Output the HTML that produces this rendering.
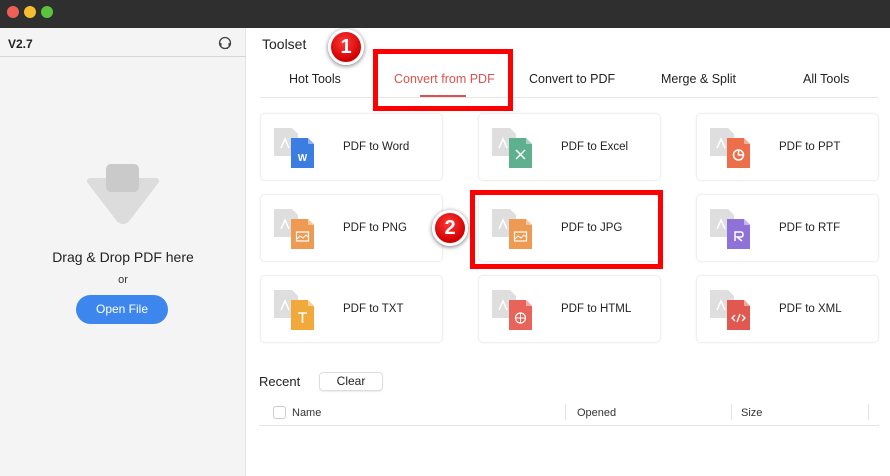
<!DOCTYPE html>
<html><head><meta charset="utf-8"><style>
*{margin:0;padding:0;box-sizing:border-box}
body{width:890px;height:476px;overflow:hidden;background:#fff;font-family:"Liberation Sans",Arial,sans-serif;position:relative;color:#222}
.a{position:absolute}
.card{position:absolute;width:183px;height:68px;border:1px solid #f0f0f0;border-radius:5px;background:#fff;box-shadow:0 0 2px rgba(0,0,0,0.05)}
.card svg{position:absolute;left:12px;top:12px}
.card span{position:absolute;left:82px;top:27px;font-size:11.5px;color:#222}
.tab{position:absolute;top:72px;font-size:12.5px;color:#222}
.badge{position:absolute;width:36px;height:36px;border-radius:50%;background:radial-gradient(circle at 45% 35%,#ff3a3a,#d00000 70%);border:3px solid #fff;box-shadow:0 1px 5px rgba(0,0,0,0.55);color:#fff;font-weight:bold;font-size:20px;text-align:center;line-height:30px}
.rbox{position:absolute;border:5px solid #f00}
</style></head><body>
<div class="a" style="left:0;top:0;width:890px;height:28px;background:#2f2f2f"></div>
<div class="a" style="left:7px;top:6px;width:12px;height:12px;border-radius:50%;background:#ee5f57"></div>
<div class="a" style="left:24px;top:6px;width:12px;height:12px;border-radius:50%;background:#f5bd2f"></div>
<div class="a" style="left:41px;top:6px;width:12px;height:12px;border-radius:50%;background:#5ac43f"></div>

<div class="a" style="left:0;top:28px;width:246px;height:448px;background:#f4f4f4;border-right:1px solid #e4e4e4"></div>
<div class="a" style="left:0;top:56px;width:246px;height:1px;background:#d6d6d6"></div>
<div class="a" style="left:8px;top:37px;font-size:12px;font-weight:bold;color:#222">V2.7</div>
<svg class="a" style="left:217px;top:35px" width="16" height="16" viewBox="0 0 16 16"><circle cx="8" cy="8" r="5.5" fill="none" stroke="#444" stroke-width="1.3"/><path d="M2.5 8h2v3h-2zM11.5 8h2v3h-2z" fill="#444"/><path d="M8 13.5h3" stroke="#444"/></svg>

<svg class="a" style="left:84px;top:163px" width="78" height="62" viewBox="0 0 78 62"><path d="M6 18h66l-29 38q-4 4-8 0z" fill="#dcdcdc" stroke="#dcdcdc" stroke-width="6" stroke-linejoin="round"/><rect x="22" y="1" width="33" height="28" rx="5" fill="#cacaca"/></svg>
<div class="a" style="left:0;width:246px;top:249px;text-align:center;font-size:14px;color:#222">Drag &amp; Drop PDF here</div>
<div class="a" style="left:0;width:246px;top:274px;text-align:center;font-size:11px;color:#333">or</div>
<div class="a" style="left:76px;top:295px;width:92px;height:29px;border-radius:15px;background:#3d86ee;color:#fff;font-size:12px;text-align:center;line-height:29px">Open File</div>

<div class="a" style="left:262px;top:36px;font-size:14px;color:#222">Toolset</div>
<div class="tab" style="left:289px">Hot Tools</div>
<div class="tab" style="left:394px;color:#d9534f">Convert from PDF</div>
<div class="tab" style="left:529px">Convert to PDF</div>
<div class="tab" style="left:661px">Merge &amp; Split</div>
<div class="tab" style="left:803px">All Tools</div>
<div class="a" style="left:260px;top:97px;width:618px;height:1px;background:#e6e6e6"></div>
<div class="a" style="left:420px;top:95px;width:46px;height:2px;background:#d9534f"></div>

<div class="card" style="left:260px;top:113px"><svg width="45" height="45"><path d="M1 2h18l6 6v22h-24z" fill="#dedede"/><path d="M8 22l4-9 4 9" stroke="#fff" stroke-width="1.5" fill="none"/><path d="M18 12h17l6 6v24h-23z" fill="#3b7de0"/><path d="M35 12v6h6z" fill="#8fb6f0"/><text x="29.5" y="35" font-size="10" font-weight="bold" fill="#fff" text-anchor="middle" font-family="Liberation Sans">W</text></svg><span>PDF to Word</span></div>
<div class="card" style="left:478px;top:113px"><svg width="45" height="45"><path d="M1 2h18l6 6v22h-24z" fill="#dedede"/><path d="M8 22l4-9 4 9" stroke="#fff" stroke-width="1.5" fill="none"/><path d="M18 12h17l6 6v24h-23z" fill="#5fb08f"/><path d="M35 12v6h6z" fill="#a6d4c1"/><path d="M25 24l9 9M34 24l-9 9" stroke="#fff" stroke-width="1.5"/></svg><span>PDF to Excel</span></div>
<div class="card" style="left:696px;top:113px"><svg width="45" height="45"><path d="M1 2h18l6 6v22h-24z" fill="#dedede"/><path d="M8 22l4-9 4 9" stroke="#fff" stroke-width="1.5" fill="none"/><path d="M18 12h17l6 6v24h-23z" fill="#ec6e4a"/><path d="M35 12v6h6z" fill="#f5b09c"/><circle cx="29.5" cy="29" r="5" fill="none" stroke="#fff" stroke-width="1.5"/><path d="M29.5 24v5h5" stroke="#fff" stroke-width="1.5" fill="none"/></svg><span>PDF to PPT</span></div>

<div class="card" style="left:260px;top:194px"><svg width="45" height="45"><path d="M1 2h18l6 6v22h-24z" fill="#dedede"/><path d="M8 22l4-9 4 9" stroke="#fff" stroke-width="1.5" fill="none"/><path d="M18 12h17l6 6v24h-23z" fill="#ef9a52"/><path d="M35 12v6h6z" fill="#f7c9a0"/><rect x="23.5" y="25" width="12" height="9" fill="none" stroke="#fff" stroke-width="1.2"/><path d="M24 32l3-3 3 2 3-3 2 2" stroke="#fff" fill="none"/></svg><span>PDF to PNG</span></div>
<div class="card" style="left:478px;top:194px"><svg width="45" height="45"><path d="M1 2h18l6 6v22h-24z" fill="#dedede"/><path d="M8 22l4-9 4 9" stroke="#fff" stroke-width="1.5" fill="none"/><path d="M18 12h17l6 6v24h-23z" fill="#ef9a52"/><path d="M35 12v6h6z" fill="#f7c9a0"/><rect x="23.5" y="25" width="12" height="9" fill="none" stroke="#fff" stroke-width="1.2"/><path d="M24 32l3-3 3 2 3-3 2 2" stroke="#fff" fill="none"/></svg><span>PDF to JPG</span></div>
<div class="card" style="left:696px;top:194px"><svg width="45" height="45"><path d="M1 2h18l6 6v22h-24z" fill="#dedede"/><path d="M8 22l4-9 4 9" stroke="#fff" stroke-width="1.5" fill="none"/><path d="M18 12h17l6 6v24h-23z" fill="#8f72d8"/><path d="M35 12v6h6z" fill="#c4b5ec"/><path d="M26 34v-9h6q2 0 2 2.5t-2 2.5h-4l5 4" stroke="#fff" stroke-width="1.5" fill="none"/></svg><span>PDF to RTF</span></div>

<div class="card" style="left:260px;top:275px"><svg width="45" height="45"><path d="M1 2h18l6 6v22h-24z" fill="#dedede"/><path d="M8 22l4-9 4 9" stroke="#fff" stroke-width="1.5" fill="none"/><path d="M18 12h17l6 6v24h-23z" fill="#f2a93b"/><path d="M35 12v6h6z" fill="#f8d49c"/><path d="M25 25h9M29.5 25v10" stroke="#fff" stroke-width="1.6"/></svg><span>PDF to TXT</span></div>
<div class="card" style="left:478px;top:275px"><svg width="45" height="45"><path d="M1 2h18l6 6v22h-24z" fill="#dedede"/><path d="M8 22l4-9 4 9" stroke="#fff" stroke-width="1.5" fill="none"/><path d="M18 12h17l6 6v24h-23z" fill="#e8635a"/><path d="M35 12v6h6z" fill="#f3aca6"/><circle cx="29.5" cy="30" r="5" fill="none" stroke="#fff" stroke-width="1.2"/><path d="M24.5 30h10M29.5 25v10" stroke="#fff"/></svg><span>PDF to HTML</span></div>
<div class="card" style="left:696px;top:275px"><svg width="45" height="45"><path d="M1 2h18l6 6v22h-24z" fill="#dedede"/><path d="M8 22l4-9 4 9" stroke="#fff" stroke-width="1.5" fill="none"/><path d="M18 12h17l6 6v24h-23z" fill="#e0584f"/><path d="M35 12v6h6z" fill="#efa7a2"/><path d="M26 27l-3 3 3 3M33 27l3 3-3 3M31 26l-3 8" stroke="#fff" stroke-width="1.3" fill="none"/></svg><span>PDF to XML</span></div>

<div class="a" style="left:259px;top:374px;font-size:13px;color:#222">Recent</div>
<div class="a" style="left:319px;top:372px;width:64px;height:19px;border:1px solid #ddd;border-radius:4px;font-size:12px;text-align:center;line-height:17px;box-shadow:0 1px 1px rgba(0,0,0,0.08)">Clear</div>
<div class="a" style="left:273px;top:406px;width:13px;height:13px;border:1px solid #ccc;border-radius:3px"></div>
<div class="a" style="left:292px;top:407px;font-size:11px;color:#333">Name</div>
<div class="a" style="left:577px;top:407px;font-size:11px;color:#333">Opened</div>
<div class="a" style="left:741px;top:407px;font-size:11px;color:#333">Size</div>
<div class="a" style="left:565px;top:404px;width:1px;height:16px;background:#e4e4e4"></div>
<div class="a" style="left:731px;top:404px;width:1px;height:16px;background:#e4e4e4"></div>
<div class="a" style="left:868px;top:404px;width:1px;height:16px;background:#e4e4e4"></div>
<div class="a" style="left:259px;top:425px;width:620px;height:1px;background:#e4e4e4"></div>

<div class="rbox" style="left:373px;top:49px;width:140px;height:62px"></div>
<div class="rbox" style="left:470px;top:190px;width:193px;height:79px"></div>
<div class="badge" style="left:328px;top:29px">1</div>
<div class="badge" style="left:432px;top:210px">2</div>
</body></html>
